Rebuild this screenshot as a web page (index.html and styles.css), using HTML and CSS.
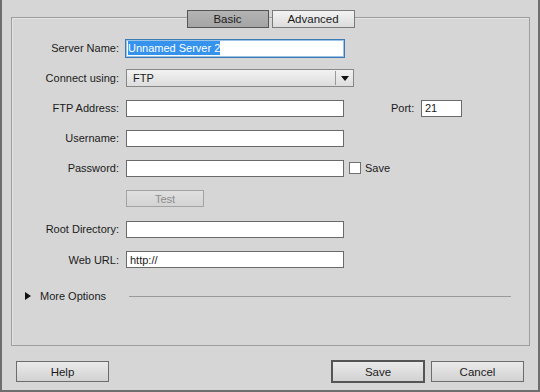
FILE: index.html
```html
<!DOCTYPE html>
<html>
<head>
<meta charset="utf-8">
<link rel="stylesheet" href="styles.css">
</head>
<body>
<div class="window">
  <div class="panel">
    <div class="tabs">
      <div class="tab active">Basic</div>
      <div class="tab">Advanced</div>
    </div>
    <div class="form">
      <div class="row">
        <div class="lbl">Server Name:</div>
        <div class="field focus"><span class="selected">Unnamed Server 2</span></div>
      </div>
      <div class="row">
        <div class="lbl">Connect using:</div>
        <div class="select">
          <span class="select-text">FTP</span>
          <span class="select-btn"><span class="arrow"></span></span>
        </div>
      </div>
      <div class="row">
        <div class="lbl">FTP Address:</div>
        <div class="field"></div>
        <div class="port-lbl">Port:</div>
        <div class="field port">21</div>
      </div>
      <div class="row">
        <div class="lbl">Username:</div>
        <div class="field"></div>
      </div>
      <div class="row">
        <div class="lbl">Password:</div>
        <div class="field"></div>
        <div class="checkbox"></div>
        <div class="check-lbl">Save</div>
      </div>
      <div class="row tall">
        <div class="lbl"></div>
        <div class="btn-test">Test</div>
      </div>
      <div class="row">
        <div class="lbl">Root Directory:</div>
        <div class="field"></div>
      </div>
      <div class="row tall">
        <div class="lbl">Web URL:</div>
        <div class="field">http://</div>
      </div>
    </div>
    <div class="more">
      <span class="triangle"></span>
      <span class="more-text">More Options</span>
      <span class="more-line"></span>
    </div>
  </div>
  <div class="footer">
    <div class="btn">Help</div>
    <div class="footer-right">
      <div class="btn default">Save</div>
      <div class="btn">Cancel</div>
    </div>
  </div>
</div>
</body>
</html>
```

FILE: styles.css
```css
html, body {
  margin: 0;
  padding: 0;
}
body {
  background: #d6d6d6;
  font-family: "Liberation Sans", Arial, sans-serif;
  font-size: 11px;
  color: #1b1b1b;
}
.window {
  width: 540px;
  height: 392px;
  box-sizing: border-box;
  border-left: 2px solid #6e6e6e;
  border-right: 2px solid #6e6e6e;
  border-bottom: 2px solid #6e6e6e;
  padding: 17px 8px 0 9px;
}
.panel {
  height: 329px;
  box-sizing: border-box;
  border: 1px solid #9e9e9e;
  box-shadow: inset 1px 1px 0 #e4e4e4;
}
.tabs {
  display: flex;
  justify-content: center;
  gap: 3px;
  margin-top: -8px;
}
.tab {
  width: 83px;
  height: 18px;
  box-sizing: border-box;
  border: 1px solid #7a7a7a;
  background: linear-gradient(#f3f3f3, #dcdcdc);
  display: flex;
  align-items: center;
  justify-content: center;
  font-size: 11.5px;
}
.tab.active {
  width: 82px;
  border-color: #555;
  background: linear-gradient(#b4b4b4, #a4a4a4);
}
.form {
  margin-top: 5px;
}
.row {
  display: flex;
  align-items: center;
  height: 30px;
}
.row.tall {
  height: 31px;
}
.lbl {
  width: 107px;
  margin-right: 7px;
  text-align: right;
  flex: none;
}
.field {
  width: 218px;
  height: 17px;
  box-sizing: border-box;
  border: 1px solid #6a6a6a;
  background: #fff;
  padding-left: 3px;
  display: flex;
  align-items: center;
  flex: none;
}
.field.focus {
  width: 220px;
  height: 19px;
  margin-left: -1px;
  border-color: #3c78b4;
  box-shadow: inset 0 0 0 1px #9cc3e8;
  padding-left: 2px;
}
.selected {
  background: #3593ee;
  color: #fff;
  line-height: 14px;
}
.select {
  width: 228px;
  height: 18px;
  box-sizing: border-box;
  border: 1px solid #878787;
  background: linear-gradient(#f2f2f2, #dddddd);
  display: flex;
  align-items: center;
}
.select-text {
  flex: 1;
  padding-left: 6px;
}
.select-btn {
  width: 17px;
  height: 14px;
  border-left: 1px solid #9a9a9a;
  display: flex;
  align-items: center;
  justify-content: center;
}
.arrow {
  width: 0;
  height: 0;
  border-left: 4px solid transparent;
  border-right: 4px solid transparent;
  border-top: 5px solid #111;
}
.port-lbl {
  margin-left: 47px;
  width: 25px;
  margin-right: 5px;
}
.field.port {
  width: 41px;
}
.checkbox {
  width: 12px;
  height: 12px;
  box-sizing: border-box;
  border: 1px solid #707070;
  background: #fff;
  margin-left: 5px;
}
.check-lbl {
  margin-left: 4px;
}
.btn-test {
  width: 78px;
  height: 17px;
  box-sizing: border-box;
  border: 1px solid #a3a3a3;
  background: linear-gradient(#e0e0e0, #d3d3d3);
  color: #8c8c8c;
  display: flex;
  align-items: center;
  justify-content: center;
}
.more {
  display: flex;
  align-items: center;
  height: 30px;
  margin-top: 6px;
  padding-left: 13px;
  padding-right: 18px;
}
.triangle {
  width: 0;
  height: 0;
  border-top: 4px solid transparent;
  border-bottom: 4px solid transparent;
  border-left: 6px solid #111;
  flex: none;
}
.more-text {
  margin-left: 9px;
  width: 89px;
  flex: none;
}
.more-line {
  flex: 1;
  height: 1px;
  background: #9a9a9a;
}
.footer {
  display: flex;
  justify-content: space-between;
  align-items: center;
  margin-top: 14px;
  padding: 0 6px 0 5px;
  height: 23px;
}
.footer-right {
  display: flex;
  align-items: center;
  gap: 6px;
}
.btn {
  width: 93px;
  height: 21px;
  box-sizing: border-box;
  border: 1px solid #6c6c6c;
  background: linear-gradient(#eaeaea, #d2d2d2);
  display: flex;
  align-items: center;
  justify-content: center;
  font-size: 11.5px;
}
.btn.default {
  width: 94px;
  height: 23px;
  border: 2px solid #555;
}
```
